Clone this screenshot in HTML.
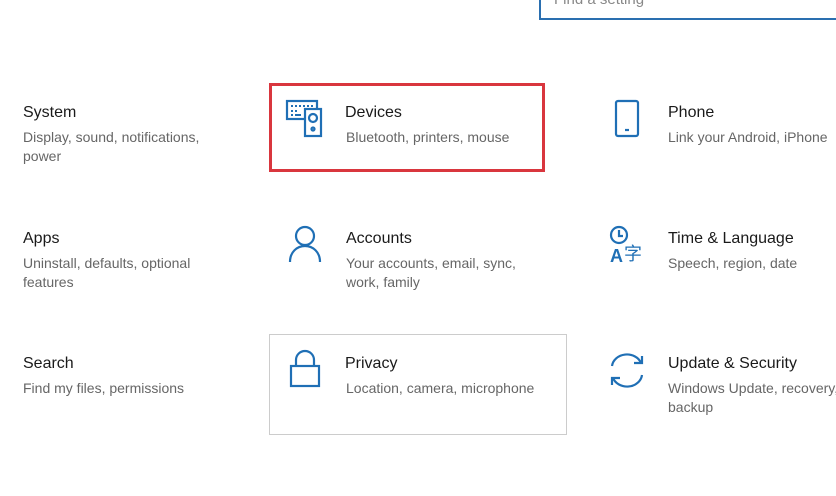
<!DOCTYPE html>
<html><head><meta charset="utf-8"><style>
body{margin:0;width:836px;height:496px;background:#fff;position:relative;overflow:hidden;font-family:"Segoe UI","Liberation Sans",sans-serif}
.t{position:absolute;font-size:16px;color:#1a1a1a;white-space:nowrap}
.s{position:absolute;font-size:14px;color:#666;line-height:19px;white-space:nowrap}
svg{position:absolute}
.ic{fill:none;stroke:#1f6fb5;stroke-width:2.2}
</style></head><body>
<div style="position:absolute;left:539px;top:-10px;width:320px;height:28px;border:2px solid #2a6fb0;border-top:none"></div>
<div style="position:absolute;left:554px;top:-9px;font-size:15px;color:#888">Find a setting</div>

<div style="position:absolute;left:269px;top:83px;width:270px;height:83px;border:3px solid #d9363e"></div>
<div style="position:absolute;left:269px;top:334px;width:296px;height:99px;border:1px solid #ccc"></div>

<div class="t" style="left:23px;top:104px">System</div>
<div class="s" style="left:23px;top:128px">Display, sound, notifications,<br>power</div>
<div class="t" style="left:345px;top:104px">Devices</div>
<div class="s" style="left:346px;top:128px">Bluetooth, printers, mouse</div>
<div class="t" style="left:668px;top:104px">Phone</div>
<div class="s" style="left:668px;top:128px">Link your Android, iPhone</div>

<div class="t" style="left:23px;top:230px">Apps</div>
<div class="s" style="left:23px;top:254px">Uninstall, defaults, optional<br>features</div>
<div class="t" style="left:346px;top:230px">Accounts</div>
<div class="s" style="left:346px;top:254px">Your accounts, email, sync,<br>work, family</div>
<div class="t" style="left:668px;top:230px">Time &amp; Language</div>
<div class="s" style="left:668px;top:254px">Speech, region, date</div>

<div class="t" style="left:23px;top:355px">Search</div>
<div class="s" style="left:23px;top:379px">Find my files, permissions</div>
<div class="t" style="left:345px;top:355px">Privacy</div>
<div class="s" style="left:346px;top:379px">Location, camera, microphone</div>
<div class="t" style="left:668px;top:355px">Update &amp; Security</div>
<div class="s" style="left:668px;top:379px">Windows Update, recovery,<br>backup</div>

<svg width="40" height="40" style="left:285px;top:99px" class="ic" viewBox="0 0 40 40"><rect x="2" y="2" width="30" height="18"/><path d="M6 7h2M10 7h2M14 7h2M18 7h2M22 7h2M26 7h2M6 12h2M10 12h2M6 16h2M10 16h6" stroke-width="2"/><rect x="20" y="10" width="16" height="27" fill="#fff"/><circle cx="28" cy="19" r="4"/><circle cx="28" cy="30" r="1.5"/></svg>
<svg width="30" height="40" style="left:612px;top:99px" class="ic" viewBox="0 0 30 40"><rect x="4" y="2" width="22" height="35" rx="2"/><path d="M13 31h4"/></svg>
<svg width="36" height="40" style="left:287px;top:224px" class="ic" viewBox="0 0 36 40"><circle cx="18" cy="12" r="9"/><path d="M3 38c0-10 7-16 15-16s15 6 15 16"/></svg>
<svg width="40" height="40" style="left:607px;top:224px" viewBox="0 0 40 40"><circle cx="12" cy="11" r="8" class="ic"/><path d="M12 6v6h4" class="ic" stroke-width="2"/><text x="3" y="38" font-size="18" font-weight="bold" fill="#1f6fb5" font-family="Liberation Sans,sans-serif">A</text><text x="17" y="36" font-size="18" fill="#1f6fb5" font-family="Noto Sans CJK SC,sans-serif">字</text></svg>
<svg width="34" height="40" style="left:288px;top:348px" class="ic" viewBox="0 0 34 40"><rect x="3" y="18" width="28" height="20"/><path d="M8 18v-6a9 9 0 0 1 18 0v6"/></svg>
<svg width="40" height="40" style="left:607px;top:348px" class="ic" viewBox="0 0 40 40"><path d="M5 18a15 13 0 0 1 29-3"/><path d="M35 27a15 13 0 0 1-29 3"/><path d="M27 15h8v-7M13 30H5v7"/></svg>
</body></html>
